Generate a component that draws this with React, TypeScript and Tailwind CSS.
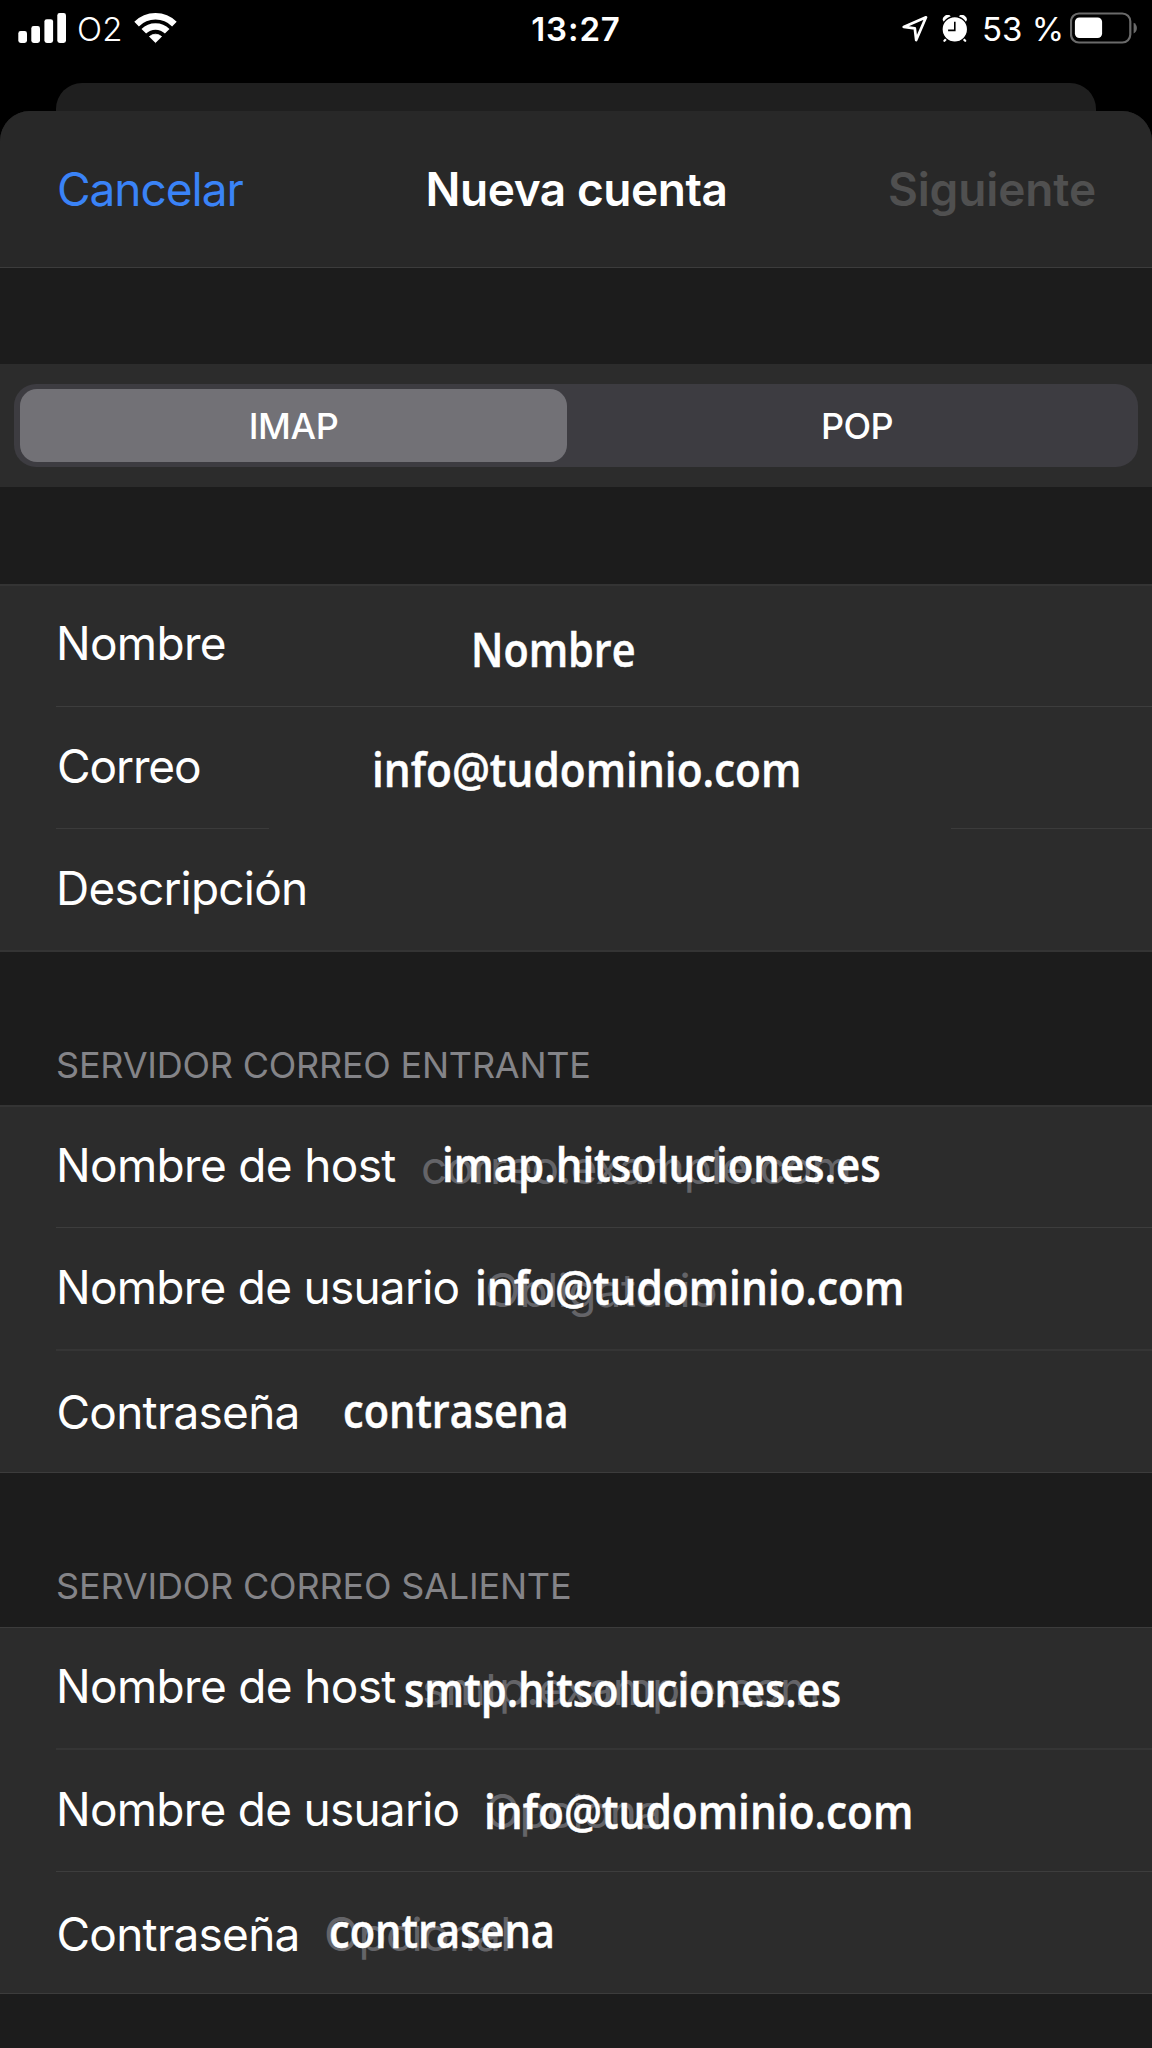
import { useState } from "react";
import clsx from "clsx";

type Campo = {
  id: string;
  etiqueta: string;
  etiquetaClass: string;
  ayuda?: string; // placeholder
  ayudaClass?: string;
  valor?: string;
  valorClass?: string;
  filaClass: string;
  linea?: "fina" | "gruesa" | "cortada";
};

const datos: Campo[] = [
  {
    id: "nombre",
    etiqueta: "Nombre",
    etiquetaClass: "pl-[56px] pt-[29px] tracking-[-0.7px]",
    valor: "Nombre",
    valorClass: "ml-[471px] mt-[31px] scale-x-[0.88]",
    filaClass: "h-[120px]",
    linea: "fina",
  },
  {
    id: "correo",
    etiqueta: "Correo",
    etiquetaClass: "pl-[57px] pt-[31px] tracking-[-1.1px]",
    valor: "info@tudominio.com",
    valorClass: "ml-[371.5px] mt-[30px] scale-x-[0.901]",
    filaClass: "h-[121px]",
    linea: "cortada",
  },
  {
    id: "descripcion",
    etiqueta: "Descripción",
    etiquetaClass: "pl-[56px] pt-[31px] tracking-[-0.8px]",
    filaClass: "h-[121px]",
  },
];

const entrante: Campo[] = [
  {
    id: "host-entrante",
    etiqueta: "Nombre de host",
    etiquetaClass: "pl-[56px] pt-[30px] tracking-[-0.67px]",
    ayuda: "correo.example.com",
    ayudaClass: "pl-[421px] pt-[32px] tracking-[-0.94px]",
    valor: "imap.hitsoluciones.es",
    valorClass: "ml-[441.5px] mt-[25px] scale-x-[0.893]",
    filaClass: "h-[120px]",
    linea: "fina",
  },
  {
    id: "usuario-entrante",
    etiqueta: "Nombre de usuario",
    etiquetaClass: "pl-[56px] pt-[31px] tracking-[-0.75px]",
    ayuda: "Obligatorio",
    ayudaClass: "pl-[485px] pt-[34px] tracking-[-0.6px]",
    valor: "info@tudominio.com",
    valorClass: "ml-[474.5px] mt-[27px] scale-x-[0.901]",
    filaClass: "h-[121px]",
    linea: "gruesa",
  },
  {
    id: "clave-entrante",
    etiqueta: "Contraseña",
    etiquetaClass: "pl-[56.5px] pt-[33px] tracking-[-0.75px]",
    valor: "contrasena",
    valorClass: "ml-[342.5px] mt-[27px] scale-x-[0.884]",
    filaClass: "h-[121px]",
  },
];

const saliente: Campo[] = [
  {
    id: "host-saliente",
    etiqueta: "Nombre de host",
    etiquetaClass: "pl-[56px] pt-[30px] tracking-[-0.67px]",
    ayuda: "smtp.example.com",
    ayudaClass: "pl-[422px] pt-[32px] tracking-[-0.89px]",
    valor: "smtp.hitsoluciones.es",
    valorClass: "ml-[404px] mt-[29px] scale-x-[0.888]",
    filaClass: "h-[120px]",
    linea: "gruesa",
  },
  {
    id: "usuario-saliente",
    etiqueta: "Nombre de usuario",
    etiquetaClass: "pl-[56px] pt-[31px] tracking-[-0.75px]",
    ayuda: "Opcional",
    ayudaClass: "pl-[485px] pt-[33px] tracking-[-0.72px]",
    valor: "info@tudominio.com",
    valorClass: "ml-[484px] mt-[29px] scale-x-[0.901]",
    filaClass: "h-[121px]",
    linea: "fina",
  },
  {
    id: "clave-saliente",
    etiqueta: "Contraseña",
    etiquetaClass: "pl-[56.5px] pt-[34px] tracking-[-0.75px]",
    ayuda: "Opcional",
    ayudaClass: "pl-[324px] pt-[34px] tracking-[-0.72px]",
    valor: "contrasena",
    valorClass: "ml-[329px] mt-[26px] scale-x-[0.886]",
    filaClass: "h-[121px]",
  },
];

const Linea = ({ tipo }: { tipo: Campo["linea"] }) => {
  if (tipo === "cortada") {
    return (
      <div className="flex justify-between pl-[56px]">
        <div className="h-px w-[213px] bg-[#3b3b3b]" />
        <div className="h-px w-[201px] bg-[#3b3b3b]" />
      </div>
    );
  }
  return (
    <div className={clsx("ml-[56px]", tipo === "gruesa" ? "h-[2px] bg-[#353535]" : "h-px bg-[#3d3d3d]")} />
  );
};

// Etiqueta, placeholder y valor comparten la misma celda del grid
const Fila = ({ campo }: { campo: Campo }) => (
  <>
    <div className={clsx("grid items-start text-[46px] leading-[56px] whitespace-nowrap", campo.filaClass)}>
      <span className={clsx("col-start-1 row-start-1", campo.etiquetaClass)}>{campo.etiqueta}</span>
      {campo.ayuda && (
        <span className={clsx("col-start-1 row-start-1 text-[#646468]", campo.ayudaClass)}>{campo.ayuda}</span>
      )}
      {campo.valor && (
        <span
          className={clsx(
            "col-start-1 row-start-1 justify-self-start origin-left font-['Open_Sans',sans-serif] text-[47px] leading-[64px] font-semibold [-webkit-text-stroke:0.5px_#fff]",
            campo.valorClass
          )}
        >
          {campo.valor}
        </span>
      )}
    </div>
    {campo.linea && <Linea tipo={campo.linea} />}
  </>
);

const BarraEstado = () => (
  <div className="grid grid-cols-3 h-[83px] text-[33px] leading-[40px] whitespace-nowrap">
    <div className="flex items-start pl-[18px]">
      <svg className="mt-[13px] shrink-0" width="48" height="30" viewBox="0 0 48 30" fill="#fff">
        <rect x="0.3" y="18" width="8.7" height="12" rx="2.4" />
        <rect x="13.3" y="13" width="8.7" height="17" rx="2.4" />
        <rect x="26.4" y="6.2" width="8.7" height="23.8" rx="2.4" />
        <rect x="39.3" y="0" width="8.7" height="30" rx="2.4" />
      </svg>
      <span className="mt-[9px] ml-[11px] w-[57px] font-light tracking-[0.2px]">O2</span>
      <svg className="mt-[12px] shrink-0" width="43" height="32" viewBox="0 0 43 32" fill="none" stroke="#fff">
        <path d="M2.6 12.1A26.75 26.75 0 0 1 40.4 12.1" strokeWidth="6.5" />
        <path d="M9.8 19.3A16.5 16.5 0 0 1 33.2 19.3" strokeWidth="6.5" />
        <path d="M15.4 24.6A9 9 0 0 1 27.6 24.6L21.5 30.6Z" fill="#fff" strokeWidth="0.8" strokeLinejoin="round" />
      </svg>
    </div>

    <span className="mt-[9px] text-center font-semibold tracking-[0.9px]">13:27</span>

    <div className="flex items-start justify-end pr-[15px]">
      <svg className="mt-[15px] mr-[14px] shrink-0" width="26" height="27" viewBox="0 0 26 27" fill="none">
        <path
          d="M1.7 11.9L24 2.3L14.2 25L12.8 13.4Z"
          stroke="#fff"
          strokeWidth="2.7"
          strokeLinejoin="round"
        />
      </svg>
      <svg className="mt-[15px] mr-[14px] shrink-0" width="26" height="27" viewBox="0 0 26 27" fill="none">
        <ellipse cx="5" cy="3.8" rx="4.4" ry="3.6" fill="#fff" transform="rotate(-35 5 3.8)" />
        <ellipse cx="20.6" cy="3.8" rx="4.4" ry="3.6" fill="#fff" transform="rotate(35 20.6 3.8)" />
        <path d="M5.4 22.8L2.4 25.8M20.2 22.8L23.2 25.8" stroke="#fff" strokeWidth="2.2" strokeLinecap="round" />
        <circle cx="12.8" cy="14.3" r="12.8" fill="#fff" stroke="#000" strokeWidth="1.3" />
        <path d="M12.8 6.7V15.4H6.1" stroke="#000" strokeWidth="1.6" />
      </svg>
      <span className="mt-[9px] w-[88px]">53 %</span>
      <svg className="mt-[12px] shrink-0" width="67" height="32" viewBox="0 0 67 32">
        <rect x="1" y="1.5" width="59.3" height="29" rx="8" fill="none" stroke="#6a6a6a" strokeWidth="2.2" />
        <rect x="4.9" y="5.5" width="27.2" height="20.5" rx="4.5" fill="#fff" />
        <path d="M63.6 10.8C68 12.5 68 19.7 63.6 21.4Z" fill="#6a6a6a" />
      </svg>
    </div>
  </div>
);

const App = () => {
  const [protocolo, setProtocolo] = useState("IMAP");

  return (
    <div className="h-[2048px] w-[1152px] overflow-hidden bg-black font-[Inter,sans-serif] text-white">
      <BarraEstado />

      {/* Hoja de detrás */}
      <div className="mx-[56px] h-[28px] rounded-t-[26px] bg-[#1f1f1f]" />

      <div className="h-[1937px] overflow-hidden rounded-t-[30px] bg-[#1c1c1c]">
        <div className="flex h-[157px] justify-between border-b border-[#3c3c3c] bg-[#282828] px-[56px] pt-[50px] text-[46px] leading-[56px] whitespace-nowrap">
          <button className="flex h-[56px] w-[240px] justify-start pl-[1px] tracking-[-1.03px] text-[#3a83f7]">
            Cancelar
          </button>
          <h1 className="pl-[1px] font-semibold tracking-[-0.45px]">Nueva cuenta</h1>
          <button className="flex h-[56px] w-[240px] justify-end font-semibold tracking-[-0.13px] text-[#505050]" disabled>
            Siguiente
          </button>
        </div>

        {/* Selector de protocolo */}
        <div className="mt-[96px] h-[123px] bg-[#2c2c2c] px-[14px] pt-[20px]">
          <div className="grid h-[83px] grid-cols-2 rounded-[22px] bg-[#3d3c41] text-[36px] leading-[44px]">
            {["IMAP", "POP"].map((p) => (
              <button
                key={p}
                onClick={() => setProtocolo(p)}
                className={clsx(
                  "mt-[5px] mr-[9px] ml-[6px] h-[73px] rounded-[17px] font-medium",
                  protocolo === p ? "bg-[#727176] tracking-[-0.4px]" : "pl-[3px] tracking-[-0.6px]"
                )}
              >
                {p}
              </button>
            ))}
          </div>
        </div>

        <section className="mt-[97px] border-y-2 border-[#343434] bg-[#2c2c2c]">
          {datos.map((c) => (
            <Fila key={c.id} campo={c} />
          ))}
        </section>

        <h2 className="h-[153px] pt-[91px] pl-[56px] text-[36px] leading-[44px] tracking-[-0.22px] text-[#848488]">
          SERVIDOR CORREO ENTRANTE
        </h2>
        <section className="border-t-2 border-b border-t-[#343434] border-b-[#3c3c3c] bg-[#2c2c2c]">
          {entrante.map((c) => (
            <Fila key={c.id} campo={c} />
          ))}
        </section>

        <h2 className="h-[154px] pt-[91px] pl-[56px] text-[36px] leading-[44px] tracking-[-0.18px] text-[#848488]">
          SERVIDOR CORREO SALIENTE
        </h2>
        <section className="border-y border-[#3c3c3c] bg-[#2c2c2c]">
          {saliente.map((c) => (
            <Fila key={c.id} campo={c} />
          ))}
        </section>
      </div>
    </div>
  );
};

export default App;
